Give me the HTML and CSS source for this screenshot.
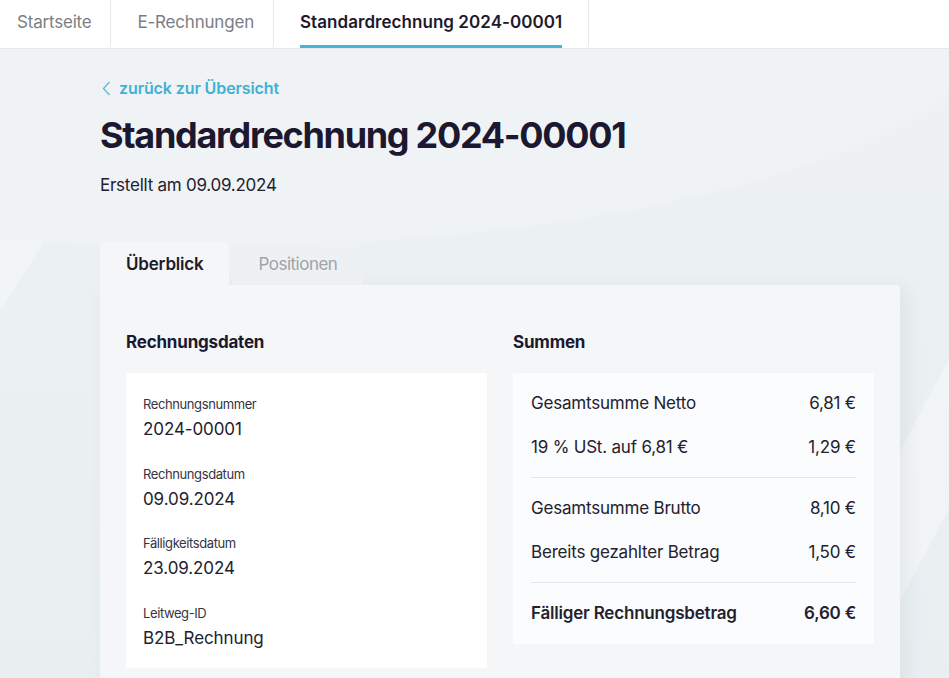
FILE: index.html
```html
<!DOCTYPE html>
<html lang="de">
<head>
<meta charset="utf-8">
<title>Standardrechnung 2024-00001</title>
<link rel="stylesheet" href="styles.css">
</head>
<body>
<nav class="topnav">
  <a class="navtab first">Startseite</a>
  <a class="navtab">E-Rechnungen</a>
  <a class="navtab active"><span class="navlabel">Standardrechnung 2024-00001</span></a>
</nav>
<main class="page">
  <a class="backlink">
    <svg class="chev" width="9" height="15" viewBox="0 0 9 15"><polyline points="7.5,1 1.5,7.5 7.5,14" fill="none" stroke="#5bb9d6" stroke-width="1.3"/></svg>
    <span>zurück zur Übersicht</span>
  </a>
  <h1 class="title">Standardrechnung 2024-00001</h1>
  <p class="subtitle">Erstellt am 09.09.2024</p>

  <div class="tabs">
    <div class="tab active">Überblick</div>
    <div class="tab">Positionen</div>
  </div>
  <section class="card">
    <div class="col">
      <h2 class="colhead">Rechnungsdaten</h2>
      <div class="box data">
        <div class="field"><div class="label">Rechnungsnummer</div><div class="value">2024-00001</div></div>
        <div class="field"><div class="label">Rechnungsdatum</div><div class="value">09.09.2024</div></div>
        <div class="field"><div class="label">Fälligkeitsdatum</div><div class="value">23.09.2024</div></div>
        <div class="field"><div class="label">Leitweg-ID</div><div class="value">B2B_Rechnung</div></div>
      </div>
    </div>
    <div class="col">
      <h2 class="colhead">Summen</h2>
      <div class="box sums">
        <div class="row"><span>Gesamtsumme Netto</span><span>6,81 €</span></div>
        <div class="row"><span>19 % USt. auf 6,81 €</span><span>1,29 €</span></div>
        <div class="divider"></div>
        <div class="row"><span>Gesamtsumme Brutto</span><span>8,10 €</span></div>
        <div class="row"><span>Bereits gezahlter Betrag</span><span>1,50 €</span></div>
        <div class="divider"></div>
        <div class="row total"><span>Fälliger Rechnungsbetrag</span><span>6,60 €</span></div>
      </div>
    </div>
  </section>
</main>
</body>
</html>
```
FILE: styles.css
```css
* { box-sizing: border-box; }
html, body { margin: 0; padding: 0; }
body {
  font-family: Inter, "Noto Sans", sans-serif;
  color: #1f1c2e;
  background-color: #e9eff1;
  background-image:
    radial-gradient(ellipse 820px 250px at 22% 0, #eff3f5 0, #eff3f5 97%, rgba(239,243,245,0) 100%),
    linear-gradient(122deg, rgba(255,255,255,0) 0, rgba(255,255,255,0) 8%, rgba(255,255,255,0.3) 8%, rgba(255,255,255,0.3) 14%, rgba(255,255,255,0) 14%),
    linear-gradient(118deg, rgba(255,255,255,0) 0, rgba(255,255,255,0) 86%, rgba(255,255,255,0.35) 86%, rgba(255,255,255,0.35) 92%, rgba(255,255,255,0) 92%),
    linear-gradient(180deg, #edf1f3 0, #e9eff1 100%);
  min-height: 678px;
  overflow: hidden;
}

.topnav {
  display: flex;
  height: 49px;
  background: #fff;
  border-bottom: 1px solid #e4e8ea;
}
.navtab {
  display: flex;
  align-items: center;
  padding: 0 19px 4px 26px;
  font-size: 17px;
  color: #7b7e84;
  border-right: 1px solid #e6e9eb;
  border-bottom-right-radius: 4px;
  letter-spacing: -0.2px;
}
.navtab.first { padding-left: 17px; }
.navtab.active { padding: 0 26px; color: #1d1a2c; font-weight: 600; align-items: stretch; letter-spacing: 0.05px; }
.navlabel {
  display: flex;
  align-items: center;
  border-bottom: 3px solid #46b5d7;
  padding-bottom: 2px;
}

.page {
  padding: 27px 49px 0 100px;
}
.backlink {
  display: flex;
  align-items: center;
  gap: 8px;
  height: 24px;
  font-size: 16px;
  font-weight: 600;
  color: #3eb1d4;
  letter-spacing: -0.1px;
  margin-left: 2px;
}
.chev { display: block; }
.title {
  margin: 13px 0 0;
  font-size: 36px;
  line-height: 44px;
  font-weight: 700;
  color: #1c1830;
  letter-spacing: -1.3px;
}
.subtitle {
  margin: 16px 0 0;
  font-size: 17px;
  line-height: 24px;
  color: #24212f;
  letter-spacing: -0.25px;
}

.tabs {
  display: flex;
  gap: 3px;
  margin-top: 45px;
}
.tab {
  height: 43px;
  display: flex;
  align-items: center;
  padding: 0 26px;
  font-size: 17px;
  color: #a0a3a9;
  background: #edf1f3;
  border-radius: 4px 4px 0 0;
  letter-spacing: -0.5px;
}
.tab.active {
  background: #f4f6f8;
  color: #1d1a2c;
  font-weight: 600;
  letter-spacing: -0.2px;
}

.card {
  width: 800px;
  background: #f4f6f8;
  border-radius: 0 4px 0 0;
  box-shadow: 6px 4px 18px rgba(120, 140, 150, 0.12);
  padding: 46px 26px 40px;
  display: grid;
  grid-template-columns: 361px 361px;
  column-gap: 26px;
  align-items: start;
}
.colhead {
  margin: 0 0 20px;
  font-size: 17px;
  line-height: 22px;
  font-weight: 700;
  color: #1c1830;
  letter-spacing: -0.2px;
}
.box {
  background: #fff;
}
.data {
  padding: 22px 17px 18px;
  display: flex;
  flex-direction: column;
  gap: 23.5px;
}
.label {
  font-size: 13px;
  line-height: 18px;
  color: #363442;
  letter-spacing: -0.4px;
}
.value {
  margin-top: 4px;
  font-size: 17px;
  line-height: 24px;
  color: #24212f;
  letter-spacing: -0.1px;
}
.sums {
  background: #fbfcfd;
  padding: 8px 18px 9px;
}
.row {
  display: flex;
  justify-content: space-between;
  padding: 10px 0;
  font-size: 17px;
  line-height: 24px;
  color: #24212f;
  letter-spacing: -0.2px;
}
.row.total { font-weight: 600; }
.divider {
  height: 1px;
  background: #e5e8eb;
  margin: 8px 0;
}
```
